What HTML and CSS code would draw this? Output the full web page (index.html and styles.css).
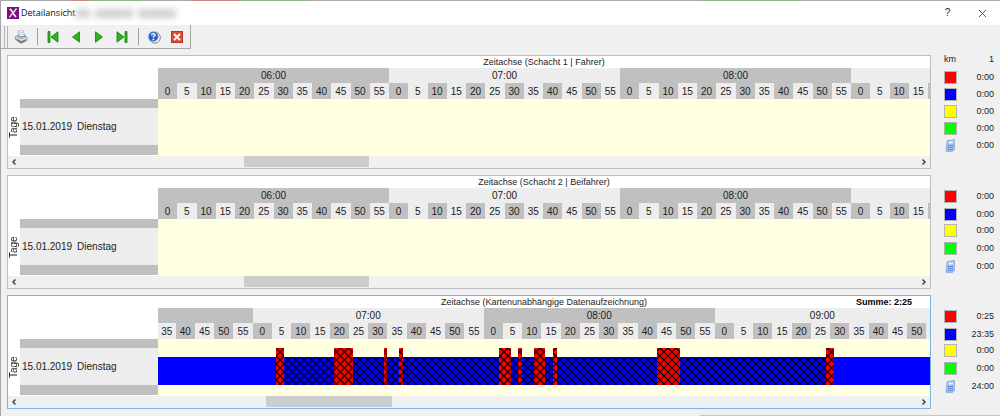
FILE: index.html
```
<!DOCTYPE html>
<html lang="de">
<head>
<meta charset="utf-8">
<title>Detailansicht</title>
<link rel="stylesheet" href="styles.css">
</head>
<body>
<div class="backdrop"></div>
<div class="window">
  <header class="titlebar">
    <svg class="app-icon" viewBox="0 0 12 12"><rect width="12" height="12" fill="#7b1080"/><path d="M2.500 2 Q4.500 2.500 5.500 5 T9 10" fill="none" stroke="#fff" stroke-width="1.700"/><path d="M9.500 1.500 L6.500 5.500 M5.300 6.500 L2.500 10.300" stroke="#f3dff4" stroke-width="1.300"/></svg>
    <h1 class="caption">Detailansicht</h1>
    <span class="redacted" aria-hidden="true"><i class="smudge"></i><i class="smudge smudge-wide"></i><i class="smudge smudge-wide"></i></span>
    <button class="caption-button" type="button" aria-label="Hilfe">?</button>
    <button class="caption-button" type="button" aria-label="Schließen"><svg width="9" height="9" viewBox="0 0 9 9"><path d="M1 1 L8 8 M8 1 L1 8" stroke="#444" stroke-width="0.9"/></svg></button>
  </header>

  <div class="toolbar" role="toolbar">
    <span class="grip"></span>
    <button class="tool" type="button" aria-label="Drucken"><svg viewBox="0 0 14 14"><path d="M4 1 L9 0.500 L11 6 L5 7 Z" fill="#fafcff" stroke="#9aa4b2" stroke-width=".7"/><path d="M5 3 L9 2.500 M5.500 4.700 L9.500 4.200" stroke="#93b7dc" stroke-width=".7"/><path d="M1.500 6.500 L4.500 5 L5.500 7 L10.500 6.300 L10.300 4.800 L13 7.500 V10.500 L7 13.500 L1.500 9.500 Z" fill="#aeb3b9" stroke="#70767e" stroke-width=".6"/><path d="M1.800 7 L7 10 L12.700 7.800" fill="none" stroke="#eef0f2" stroke-width="1"/><path d="M3 9.500 L7 12.500 L11 10.500" fill="none" stroke="#555b63"/></svg></button>
    <span class="separator"></span>
    <button class="tool" type="button" aria-label="Erster"><svg viewBox="0 0 14 14"><path d="M2 1.500 H4 V12.500 H2 Z M12 1.800 V12.200 L5 7 Z" fill="#2bb21d" stroke="#168010" stroke-width=".8"/></svg></button>
    <button class="tool" type="button" aria-label="Zurück"><svg viewBox="0 0 14 14"><path d="M10.500 1.800 V12.200 L3.500 7 Z" fill="#2bb21d" stroke="#168010" stroke-width=".8"/></svg></button>
    <button class="tool" type="button" aria-label="Weiter"><svg viewBox="0 0 14 14"><path d="M3.500 1.800 V12.200 L10.500 7 Z" fill="#2bb21d" stroke="#168010" stroke-width=".8"/></svg></button>
    <button class="tool" type="button" aria-label="Letzter"><svg viewBox="0 0 14 14"><path d="M10 1.500 H12 V12.500 H10 Z M2 1.800 V12.200 L9 7 Z" fill="#2bb21d" stroke="#168010" stroke-width=".8"/></svg></button>
    <span class="separator"></span>
    <button class="tool" type="button" aria-label="Hilfe"><svg viewBox="0 0 14 14"><circle cx="7.800" cy="7.600" r="5.500" fill="#fff" stroke="#777" stroke-width="1"/><circle cx="6.300" cy="6.600" r="5.100" fill="#2c62c8" stroke="#bdd0f2" stroke-width=".7"/><path d="M4.500 5.300 Q4.700 3.700 6.400 3.700 Q8.200 3.800 8.100 5.200 Q7.900 6.300 6.400 6.700 V7.600" fill="none" stroke="#fff" stroke-width="1.300"/><circle cx="6.400" cy="9.400" r=".9" fill="#fff"/></svg></button>
    <button class="tool" type="button" aria-label="Beenden"><svg viewBox="0 0 14 14"><rect x="1.500" y="1.500" width="11" height="11" fill="#df4b32" stroke="#b93720"/><path d="M4 4 L10 10 M10 4 L4 10" stroke="#fff" stroke-width="1.800"/></svg></button>
  </div>

  <main class="content">
    <section class="entry">
      <div class="panel">
        <h2 class="panel-title">Zeitachse (Schacht 1 | Fahrer)</h2>
        <div class="chart">
          <div class="side"><span class="axis-name">Tage</span><div class="day"><span>15.01.2019</span><span>Dienstag</span></div></div>
          <div class="timeline">
            <div class="hours"><span style="flex-grow:60">06:00</span><span style="flex-grow:60">07:00</span><span style="flex-grow:60">08:00</span><span style="flex-grow:20.5"></span></div>
            <div class="ticks">
              <span>0</span><span>5</span><span>10</span><span>15</span><span>20</span><span>25</span><span>30</span><span>35</span><span>40</span><span>45</span><span>50</span><span>55</span>
              <span>0</span><span>5</span><span>10</span><span>15</span><span>20</span><span>25</span><span>30</span><span>35</span><span>40</span><span>45</span><span>50</span><span>55</span>
              <span>0</span><span>5</span><span>10</span><span>15</span><span>20</span><span>25</span><span>30</span><span>35</span><span>40</span><span>45</span><span>50</span><span>55</span>
              <span>0</span><span>5</span><span>10</span><span>15</span><span style="flex-grow:0.5"></span>
            </div>
            <div class="plot"></div>
          </div>
        </div>
        <div class="scrollbar"><button class="arrow" type="button" aria-label="Nach links"><svg viewBox="0 0 6 8"><path d="M4.500 1.500 L2 4 L4.500 6.500"/></svg></button><div class="rail"><div class="thumb" style="margin-left:24.9%"></div></div><button class="arrow" type="button" aria-label="Nach rechts"><svg viewBox="0 0 6 8"><path d="M1.500 1.500 L4 4 L1.500 6.500"/></svg></button></div>
      </div>
      <dl class="legend legend-km">
        <div class="row"><dt>km</dt><dd>1</dd></div>
        <div class="row"><dt class="swatch red"></dt><dd>0:00</dd></div>
        <div class="row"><dt class="swatch blue"></dt><dd>0:00</dd></div>
        <div class="row"><dt class="swatch yellow"></dt><dd>0:00</dd></div>
        <div class="row"><dt class="swatch green"></dt><dd>0:00</dd></div>
        <div class="row"><dt class="calc"><svg viewBox="0 0 12 13"><path d="M3 1.500 L10.500 .5 V10.500 L8.500 12.500 H2 Z" fill="#9dbdea" stroke="#7da0d8" stroke-width=".6"/><path d="M4.500 2.800 L9 2.300 V4.200 L4.500 4.700 Z" fill="#e8f4ff"/><path d="M4 6.500 H9 M4 8.500 H9 M4 10.500 H8.500" stroke="#5478cb" stroke-dasharray="1.200 .6"/></svg></dt><dd>0:00</dd></div>
      </dl>
    </section>

    <section class="entry">
      <div class="panel">
        <h2 class="panel-title">Zeitachse (Schacht 2 | Beifahrer)</h2>
        <div class="chart">
          <div class="side"><span class="axis-name">Tage</span><div class="day"><span>15.01.2019</span><span>Dienstag</span></div></div>
          <div class="timeline">
            <div class="hours"><span style="flex-grow:60">06:00</span><span style="flex-grow:60">07:00</span><span style="flex-grow:60">08:00</span><span style="flex-grow:20.5"></span></div>
            <div class="ticks">
              <span>0</span><span>5</span><span>10</span><span>15</span><span>20</span><span>25</span><span>30</span><span>35</span><span>40</span><span>45</span><span>50</span><span>55</span>
              <span>0</span><span>5</span><span>10</span><span>15</span><span>20</span><span>25</span><span>30</span><span>35</span><span>40</span><span>45</span><span>50</span><span>55</span>
              <span>0</span><span>5</span><span>10</span><span>15</span><span>20</span><span>25</span><span>30</span><span>35</span><span>40</span><span>45</span><span>50</span><span>55</span>
              <span>0</span><span>5</span><span>10</span><span>15</span><span style="flex-grow:0.5"></span>
            </div>
            <div class="plot"></div>
          </div>
        </div>
        <div class="scrollbar"><button class="arrow" type="button" aria-label="Nach links"><svg viewBox="0 0 6 8"><path d="M4.500 1.500 L2 4 L4.500 6.500"/></svg></button><div class="rail"><div class="thumb" style="margin-left:24.9%"></div></div><button class="arrow" type="button" aria-label="Nach rechts"><svg viewBox="0 0 6 8"><path d="M1.500 1.500 L4 4 L1.500 6.500"/></svg></button></div>
      </div>
      <dl class="legend">
        <div class="row"><dt class="swatch red"></dt><dd>0:00</dd></div>
        <div class="row"><dt class="swatch blue"></dt><dd>0:00</dd></div>
        <div class="row"><dt class="swatch yellow"></dt><dd>0:00</dd></div>
        <div class="row"><dt class="swatch green"></dt><dd>0:00</dd></div>
        <div class="row"><dt class="calc"><svg viewBox="0 0 12 13"><path d="M3 1.500 L10.500 .5 V10.500 L8.500 12.500 H2 Z" fill="#9dbdea" stroke="#7da0d8" stroke-width=".6"/><path d="M4.500 2.800 L9 2.300 V4.200 L4.500 4.700 Z" fill="#e8f4ff"/><path d="M4 6.500 H9 M4 8.500 H9 M4 10.500 H8.500" stroke="#5478cb" stroke-dasharray="1.200 .6"/></svg></dt><dd>0:00</dd></div>
      </dl>
    </section>

    <section class="entry">
      <div class="panel panel-active">
        <h2 class="panel-title">Zeitachse (Kartenunabhängige Datenaufzeichnung)<strong class="sum">Summe: 2:25</strong></h2>
        <div class="chart">
          <div class="side"><span class="axis-name">Tage</span><div class="day"><span>15.01.2019</span><span>Dienstag</span></div></div>
          <div class="timeline">
            <div class="hours"><span style="flex-grow:24.6"></span><span class="light" style="flex-grow:60">07:00</span><span class="dark" style="flex-grow:60">08:00</span><span class="light" style="flex-grow:55.9">09:00</span></div>
            <div class="ticks ticks-shifted">
              <span style="flex-grow:4.6">35</span><span>40</span><span>45</span><span>50</span><span>55</span>
              <span>0</span><span>5</span><span>10</span><span>15</span><span>20</span><span>25</span><span>30</span><span>35</span><span>40</span><span>45</span><span>50</span><span>55</span>
              <span>0</span><span>5</span><span>10</span><span>15</span><span>20</span><span>25</span><span>30</span><span>35</span><span>40</span><span>45</span><span>50</span><span>55</span>
              <span>0</span><span>5</span><span>10</span><span>15</span><span>20</span><span>25</span><span>30</span><span>35</span><span>40</span><span>45</span><span>50</span><span style="flex-grow:0.9"></span>
            </div>
            <div class="plot">
              <i class="rest" style="flex-grow:30.6"></i><i class="drive" style="flex-grow:2"></i><i class="rest hatch" style="flex-grow:13"></i><i class="drive" style="flex-grow:5"></i><i class="rest hatch" style="flex-grow:8"></i><i class="drive" style="flex-grow:1"></i><i class="rest hatch" style="flex-grow:3"></i><i class="drive" style="flex-grow:1"></i><i class="rest hatch" style="flex-grow:25"></i><i class="drive" style="flex-grow:3"></i><i class="rest hatch" style="flex-grow:2"></i><i class="drive" style="flex-grow:1"></i><i class="rest hatch" style="flex-grow:3"></i><i class="drive" style="flex-grow:3"></i><i class="rest hatch" style="flex-grow:2"></i><i class="drive" style="flex-grow:1"></i><i class="rest hatch" style="flex-grow:26"></i><i class="drive" style="flex-grow:6"></i><i class="rest hatch" style="flex-grow:38"></i><i class="drive" style="flex-grow:2"></i><i class="rest" style="flex-grow:24.9"></i>
            </div>
          </div>
        </div>
        <div class="scrollbar"><button class="arrow" type="button" aria-label="Nach links"><svg viewBox="0 0 6 8"><path d="M4.500 1.500 L2 4 L4.500 6.500"/></svg></button><div class="rail"><div class="thumb" style="margin-left:27.4%"></div></div><button class="arrow" type="button" aria-label="Nach rechts"><svg viewBox="0 0 6 8"><path d="M1.500 1.500 L4 4 L1.500 6.500"/></svg></button></div>
      </div>
      <dl class="legend">
        <div class="row"><dt class="swatch red"></dt><dd>0:25</dd></div>
        <div class="row"><dt class="swatch blue"></dt><dd>23:35</dd></div>
        <div class="row"><dt class="swatch yellow"></dt><dd>0:00</dd></div>
        <div class="row"><dt class="swatch green"></dt><dd>0:00</dd></div>
        <div class="row"><dt class="calc"><svg viewBox="0 0 12 13"><path d="M3 1.500 L10.500 .5 V10.500 L8.500 12.500 H2 Z" fill="#9dbdea" stroke="#7da0d8" stroke-width=".6"/><path d="M4.500 2.800 L9 2.300 V4.200 L4.500 4.700 Z" fill="#e8f4ff"/><path d="M4 6.500 H9 M4 8.500 H9 M4 10.500 H8.500" stroke="#5478cb" stroke-dasharray="1.200 .6"/></svg></dt><dd>24:00</dd></div>
      </dl>
    </section>
  </main>
  <div class="window-edge"></div>
</div>
</body>
</html>
```
FILE: styles.css
```
* { box-sizing: border-box; }
body {
  margin: 0;
  background: #f0f0f0;
  color: #222;
  font: 10px/12px "Liberation Sans", Arial, sans-serif;
}
h1, h2, dl, dt, dd { margin: 0; font-weight: normal; }
button { padding: 0; border: 0; background: none; color: inherit; font: inherit; }
svg { display: block; }

.backdrop {
  height: 1px;
  background: linear-gradient(90deg, #a9a9a9 0 7%, #c98a8c 7% 9%, #86b986 9% 14%, #a9a9a9 14% 19%, #c98a8c 19% 24%, #86b986 24% 31%, #b0aca9 31% 70%, #86b986 70% 80%, #b0aca9 80%);
}
.window { border-left: 1px solid #a5a5a5; }

.titlebar {
  display: flex;
  align-items: center;
  height: 24px;
  padding-left: 6px;
  background: #fff;
}
.app-icon { width: 12px; height: 12px; margin-right: 2px; }
.caption { font: 9px/12px "Open Sans", "Noto Sans", sans-serif; color: #111; }
.redacted {
  display: flex;
  flex: 1;
  gap: 5px;
  align-items: center;
  padding-left: 1px;
  filter: blur(3px);
}
.smudge { width: 14px; height: 9px; background: #d0d0d0; }
.smudge-wide { width: 38px; }
.caption-button {
  display: flex;
  align-items: center;
  justify-content: center;
  width: 35px;
  height: 23px;
}

.toolbar {
  display: flex;
  align-items: center;
  width: max-content;
  height: 24px;
  padding: 0 2px 0 3px;
  border: solid #a8a8a8;
  border-width: 0 1px 1px 0;
}
.grip { width: 4px; height: 22px; margin-right: 1px; border: solid #b5b5b5; border-width: 0 1px; }
.tool { display: flex; justify-content: center; width: 23px; }
.tool svg { width: 14px; height: 14px; }
.separator { width: 1px; height: 17px; margin: 0 3px 0 5px; background: #a0a0a0; }

.content { display: grid; gap: 6px; padding: 6px 6px 6px; }
.entry { display: grid; grid-template-columns: 1fr 50px; gap: 13px; }
.window-edge { width: 30%; height: 1px; margin-left: auto; background: #c4c4c4; }

.panel { min-width: 0; border: 1px solid #bcbec4; background: #fff; }
.panel-active { border-color: #7fb2e5; }
.panel-title {
  position: relative;
  height: 12px;
  padding-left: 150px;
  font-size: 9px;
  line-height: 13px;
  text-align: center;
  white-space: nowrap;
}
.sum { position: absolute; right: 18px; color: #000; }

.chart { display: grid; grid-template-columns: 150px 1fr; }
.side { display: grid; grid-template-columns: 12px 1fr; padding: 31px 0 1px; }
.axis-name { writing-mode: vertical-rl; transform: rotate(180deg); text-align: center; }
.day {
  display: flex;
  align-items: center;
  gap: 5px;
  padding-left: 2px;
  border: solid #c0c0c0;
  border-width: 9px 0 10px;
  background: #ededed;
}
.timeline { min-width: 0; }
.hours, .ticks { display: flex; background: #ededed; overflow: hidden; }
.hours span, .ticks span { flex: 1 1 0; min-width: 0; text-align: center; }
.hours span { height: 15px; line-height: 16px; }
.hours span:nth-child(odd) { background: #c0c0c0; }
.hours .light:nth-child(n) { background: #ededed; }
.hours .dark:nth-child(n) { background: #c0c0c0; }
.hours span:nth-child(4) { background: #ededed; }
.ticks span { flex-grow: 5; height: 16px; line-height: 17px; }
.ticks span:nth-child(odd) { background: #c0c0c0; }
.ticks-shifted span:nth-child(odd) { background: #ededed; }
.ticks-shifted span:nth-child(even) { background: #c0c0c0; }

.plot {
  display: flex;
  align-items: flex-end;
  height: 57px;
  padding-bottom: 11px;
  background: #ffffe1;
}
.rest, .drive { flex: 1 1 0; }
.rest { height: 28px; background-color: #00f; }
.drive { height: 37px; background-color: #f00; }
.drive, .hatch {
  background-image:
    linear-gradient(45deg, transparent 41%, #000 50%, transparent 59%),
    linear-gradient(135deg, transparent 41%, #000 50%, transparent 59%);
  background-size: 8px 8px;
  background-attachment: fixed;
}

.scrollbar { display: flex; height: 12px; background: #f0f0f0; }
.arrow { display: flex; align-items: center; justify-content: center; width: 12px; }
.arrow svg { width: 6px; height: 8px; fill: none; stroke: #444; stroke-width: 1.5; }
.rail { flex: 1; }
.thumb { width: 14%; height: 11px; background: #cdcdcd; }

.legend { padding-top: 14px; font-size: 9px; line-height: 15px; }
.legend-km { padding-top: 0; }
.row { display: flex; align-items: center; justify-content: space-between; height: 15px; }
.row + .row { margin-top: 3px; }
.row:nth-child(3) { margin-top: 1px; }
.legend-km .row:nth-child(n) { margin-top: 2px; }
.legend-km .row:nth-child(1) { height: 9px; margin-top: 0; }
.legend-km .row:nth-child(2) { margin-top: 6px; }
.swatch { width: 13px; height: 13px; border: 1px solid #b4b4b4; }
.red { background: #f00; }
.blue { background: #00f; }
.yellow { background: #ff0; }
.green { background: #0f0; }
.calc svg { width: 12px; height: 13px; }
```
